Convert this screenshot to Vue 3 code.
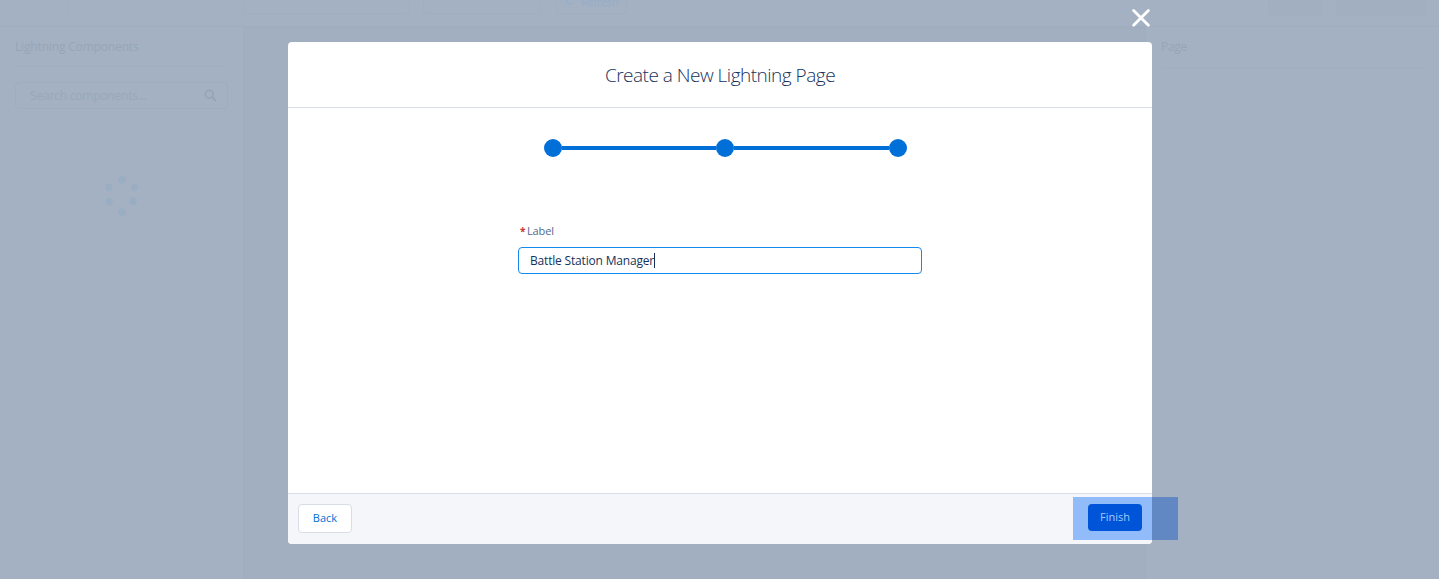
<script setup>
const dots = [[19.2, 3.8], [31.5, 11.2], [30, 25.3], [19.2, 36.3], [6.2, 25.6], [5.7, 11.2]]
</script>

<template>
  <div class="page">
    <div class="toolbar">
      <span class="tool divider"></span>
      <span class="tool t1"></span>
      <span class="tool t2"></span>
      <span class="tool t3">
        <svg width="10" height="12" viewBox="0 0 10 12"><path d="M3 1.5A4 4 0 1 0 8 8" fill="none" stroke="currentColor" stroke-width="1.5" /></svg>
        <span>Refresh</span>
      </span>
      <span class="tool t4"></span>
      <span class="tool t5"></span>
    </div>
    <div class="workspace">
      <aside class="left">
        <h2>Lightning Components</h2>
        <div class="search">
          <span>Search components...</span>
          <svg width="13" height="13" viewBox="0 0 13 13" fill="none" stroke="#92a4b8" stroke-width="1.6"><circle cx="5.2" cy="5.2" r="3.9" /><path d="M8 8l4 4" stroke-width="2" /></svg>
        </div>
        <svg class="spinner" width="38" height="41" viewBox="0 0 38 41">
          <circle v-for="(d, i) in dots" :key="i" :cx="d[0]" :cy="d[1]" r="3.7" fill="#99aec3" />
        </svg>
      </aside>
      <main class="canvas"></main>
      <aside class="right"><h2>Page</h2></aside>
    </div>

    <svg class="close" width="20" height="20" viewBox="0 0 20 20"><path d="M2.6 2.4L17.4 17.2M17.4 2.4L2.6 17.2" stroke="#fff" stroke-width="2.8" stroke-linecap="round" /></svg>

    <section class="modal">
      <header><h1>Create a New Lightning Page</h1></header>
      <div class="body">
        <div class="steps">
          <i class="dot"></i><i class="bar first"></i><i class="dot"></i><i class="bar"></i><i class="dot"></i>
        </div>
        <div class="field">
          <label><span class="star">*</span><span class="label-text">Label</span></label>
          <div class="input"><span class="value">Battle Station Manager</span><i class="caret"></i></div>
        </div>
      </div>
      <footer>
        <button class="back"><span>Back</span></button>
        <button class="finish"><span>Finish</span></button>
        <div class="highlight"></div>
      </footer>
    </section>
  </div>
</template>

<style>
body { overflow: hidden; }
</style>

<style scoped>
* { box-sizing: border-box; }
.page {
  position: relative;
  width: 1439px;
  height: 579px;
  display: flex;
  flex-direction: column;
  overflow: hidden;
  background: #a4b1c2;
  font-family: "Open Sans", "Noto Sans", sans-serif;
}
h1, h2 { margin: 0; font-weight: 400; }
.toolbar { display: flex; height: 27px; flex: none; border-bottom: 1px solid #a0adbe; }
.tool { height: 14px; border: 1px solid #a0aebf; border-top: 0; border-radius: 0 0 4px 4px; }
.divider { width: 69px; border-width: 0 1px 0 0; border-radius: 0; }
.t1 { width: 167px; margin-left: 174px; }
.t2 { width: 118px; margin-left: 13px; }
.t3 { width: 71px; margin-left: 15px; display: flex; padding-left: 8px; color: #95adc8; font-size: 11px; line-height: 12px; letter-spacing: -.3px; }
.t3 svg { flex: none; margin-top: -5px; }
.t3 span { margin: -4px 0 0 6px; }
.t4, .t5 { height: 16px; border-color: #a2afc0; background: #a2afc1; }
.t4 { width: 54px; margin-left: 641px; }
.t5 { width: 90px; margin-left: 14px; }
.workspace { display: flex; flex: 1; }
.left { width: 243px; padding: 0 15px; }
h2 { height: 40px; padding-top: 11px; border-bottom: 1px solid #a1aebf; color: #95a6b9; font-size: 12px; line-height: 18px; letter-spacing: -.16px; }
.right h2 { height: 41px; letter-spacing: -.3px; }
.search {
  display: flex; align-items: center; justify-content: space-between;
  height: 27px; margin-top: 15px; padding: 0 10px 0 14px;
  border: 1px solid #a0adbe; border-radius: 4px;
  color: #98a8ba; font-size: 12px; letter-spacing: -.2px;
}
.spinner { display: block; margin: 67px 0 0 88px; }
.canvas { flex: 1; background: #a2afc1; border: 1px solid #9fadbf; border-width: 2px 1px 0 1px; }
.right { width: 293px; padding: 0 15px; }
.close { position: absolute; left: 1131px; top: 8px; }
.modal {
  position: absolute; left: 288px; top: 42px; width: 864px; height: 502px;
  display: flex; flex-direction: column; background: #fff; border-radius: 4px;
}
header { height: 66px; flex: none; border-bottom: 1px solid #d8dde6; text-align: center; }
h1 { padding-top: 20px; color: #16325c; font-size: 19px; font-weight: 300; line-height: 26px; letter-spacing: -.5px; }
.body { flex: 1; }
.steps { display: flex; align-items: center; width: 363px; margin: 31px 0 0 256px; }
.dot { width: 18px; height: 18px; flex: none; border-radius: 50%; background: #0070d8; }
.bar { height: 4px; flex: 1; background: #0070d8; }
.bar.first { flex: 0 0 154px; }
.field { width: 404px; margin: 65px 0 0 230px; }
label { display: flex; height: 18px; padding-left: 2px; font-size: 11px; line-height: 18px; color: #54698d; letter-spacing: -.15px; }
.star { width: 7px; color: #c23934; font-weight: 700; font-size: 10px; }
.input { display: flex; align-items: center; height: 27px; margin-top: 7px; padding-left: 11px; border: 1px solid #1589ee; border-radius: 4px; color: #16325c; font-size: 12px; }
.value { font-weight: 500; letter-spacing: -.18px; }
.caret { width: 1px; height: 15px; background: #16325c; }
footer {
  position: relative; display: flex; justify-content: space-between; height: 51px; flex: none;
  padding: 10px; border-top: 1px solid #d8dde6; border-radius: 0 0 4px 4px; background: #f4f6f9;
}
button { padding: 0 0 2px; border-radius: 4px; font: 500 11px/16px "Open Sans", "Noto Sans", sans-serif; }
.back { width: 54px; height: 29px; border: 1px solid #d8dde6; background: #fff; color: #0070d2; }
.finish { position: relative; z-index: 1; width: 54px; height: 27px; border: 0; background: #0054d8; color: #9fccff; }
.highlight {
  position: absolute; left: 785px; top: 3px; width: 105px; height: 43px;
  background: linear-gradient(90deg, #92bbf9 79px, #6188c3 79px);
}
</style>
